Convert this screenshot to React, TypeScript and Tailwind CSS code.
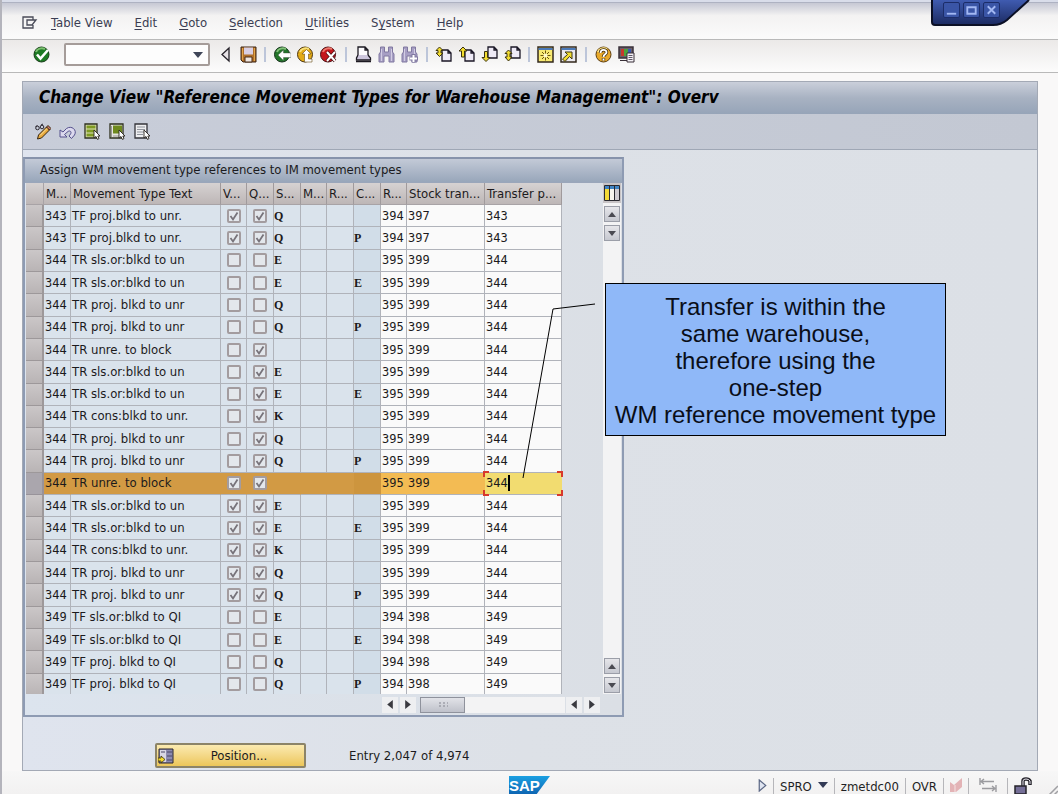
import type { ReactNode } from "react"

type Row = {
    type: string
    text: string
    v: boolean
    q: boolean
    stock: string
    special: string
    ref: string
    transfer: string
    posting: string
    selected?: boolean
}

const row = (type: string, text: string, v: number, q: number, stock: string, special: string, ref: string, transfer: string, selected = false): Row => ({
    type, text, v: v === 1, q: q === 1, stock, special, ref, transfer, posting: type, selected
})

const rows: Row[] = [
    row("343", "TF proj.blkd to unr.", 1, 1, "Q", "", "394", "397"),
    row("343", "TF proj.blkd to unr.", 1, 1, "Q", "P", "394", "397"),
    row("344", "TR sls.or:blkd to un", 0, 0, "E", "", "395", "399"),
    row("344", "TR sls.or:blkd to un", 0, 0, "E", "E", "395", "399"),
    row("344", "TR proj. blkd to unr", 0, 0, "Q", "", "395", "399"),
    row("344", "TR proj. blkd to unr", 0, 0, "Q", "P", "395", "399"),
    row("344", "TR unre. to block", 0, 1, "", "", "395", "399"),
    row("344", "TR sls.or:blkd to un", 0, 1, "E", "", "395", "399"),
    row("344", "TR sls.or:blkd to un", 0, 1, "E", "E", "395", "399"),
    row("344", "TR cons:blkd to unr.", 0, 1, "K", "", "395", "399"),
    row("344", "TR proj. blkd to unr", 0, 1, "Q", "", "395", "399"),
    row("344", "TR proj. blkd to unr", 0, 1, "Q", "P", "395", "399"),
    row("344", "TR unre. to block", 1, 1, "", "", "395", "399", true),
    row("344", "TR sls.or:blkd to un", 1, 1, "E", "", "395", "399"),
    row("344", "TR sls.or:blkd to un", 1, 1, "E", "E", "395", "399"),
    row("344", "TR cons:blkd to unr.", 1, 1, "K", "", "395", "399"),
    row("344", "TR proj. blkd to unr", 1, 1, "Q", "", "395", "399"),
    row("344", "TR proj. blkd to unr", 1, 1, "Q", "P", "395", "399"),
    row("349", "TF sls.or:blkd to QI", 0, 0, "E", "", "394", "398"),
    row("349", "TF sls.or:blkd to QI", 0, 0, "E", "E", "394", "398"),
    row("349", "TF proj. blkd to QI", 0, 0, "Q", "", "394", "398"),
    row("349", "TF proj. blkd to QI", 0, 0, "Q", "P", "394", "398"),
]

const menus = [
    { key: "T", rest: "able View" },
    { key: "E", rest: "dit" },
    { key: "G", rest: "oto" },
    { key: "S", rest: "election" },
    { key: "U", rest: "tilities" },
    { key: "y", before: "S", rest: "stem" },
    { key: "H", rest: "elp" },
]

const Icon = ({ children }: { children: ReactNode }) => (
    <svg viewBox="0 0 17 17" className="block size-[17px] shrink-0" fill="none" aria-hidden="true">{children}</svg>
)

const IconButton = ({ label, children }: { label: string, children: ReactNode }) => (
    <button type="button" aria-label={label} className="shrink-0"><Icon>{children}</Icon></button>
)

const Divider = () => <span className="block h-[15px] w-[2px] shrink-0 bg-[#bcc5d9]" />

// page sheet shared by the four paging icons
const Sheet = ({ x, y }: { x: number, y: number }) => (
    <path d={`M${x} ${y}h6l3 3v8h-9z M${x + 6} ${y}v3h3`} fill="#eeeaf6" stroke="#1b1726" strokeWidth="1.3" />
)

const Binoculars = () => (
    <>
        <path d="M2.500 1h4v5h4V1h4v5l1.500 2v8h-5v-6H6v6H1V8l1.500-2z" fill="#a79fc4" stroke="#8078a0" />
        <path d="M3.500 3v12M13.500 3v12" stroke="#d3cde4" />
    </>
)

const Toolbar = () => (
    <div className="flex h-[33px] items-center border-b border-[#b9b9b9] bg-linear-to-b from-[#ebe9e8] to-[#fcfcfc] pb-[3px] pl-[31px]">
        <IconButton label="Enter">
            <circle cx="8.500" cy="8.500" r="7.500" fill="#1d7a24" stroke="#173b18" />
            <path d="M3 6a6 5 0 0 1 9-3" stroke="#7cc06f" strokeWidth="2" />
            <path d="M4 8.500l3.500 4L15 4" stroke="#fff" strokeWidth="2.600" />
        </IconButton>
        <div className="ml-[14px] flex h-[23px] w-[146px] items-center rounded-[2px] border-2 border-[#a59c99] bg-[#fdfdfd]">
            <input aria-label="Command" className="min-w-0 flex-1 bg-transparent px-1 text-xs outline-none" />
            <button type="button" aria-label="Command history" className="pr-[5px]">
                <svg viewBox="0 0 10 6" className="h-[6px] w-[10px]"><path d="M0 0h10L5 6z" fill="#3f4558" /></svg>
            </button>
        </div>
        <div className="ml-[7px] flex items-center gap-[6px]">
            <IconButton label="Hide command field">
                <path d="M12 2v13L5 8.500z" fill="#e6e2e6" stroke="#26222a" strokeWidth="1.300" />
            </IconButton>
            <IconButton label="Save">
                <path d="M1 1h15v15H3l-2-2z" fill="#b0702a" stroke="#3c2415" />
                <path d="M4 1.500h9v7H4z" fill="#d9cfe2" />
                <path d="M5 11h7v5H5z" fill="#eee6e0" stroke="#4a2d18" />
                <path d="M2.500 2v12M14.500 2v13" stroke="#e2a54a" />
            </IconButton>
        </div>
        <div className="ml-[7px] mr-[8px]"><Divider /></div>
        <div className="flex items-center gap-[6px]">
            <IconButton label="Back">
                <circle cx="8" cy="8.500" r="7.500" fill="#23752a" stroke="#14301a" />
                <path d="M3 6a6 5 0 0 1 9-3" stroke="#83c078" strokeWidth="2" />
                <path d="M4 9l5.500-5v3h7.500v4.500H9.500v3z" fill="#fff" stroke="#3d4a3d" strokeWidth=".4" />
            </IconButton>
            <IconButton label="Exit">
                <circle cx="8" cy="8.500" r="7.500" fill="#e3ab16" stroke="#4a3410" />
                <path d="M3 6a6 5 0 0 1 9-3" stroke="#f8e27c" strokeWidth="2" />
                <path d="M9.500 3.500l4.500 4.500h-2.500v5H15v3H7.500V8H5z" fill="#fff" stroke="#6a4f18" strokeWidth=".6" />
            </IconButton>
            <IconButton label="Cancel">
                <circle cx="8" cy="8.500" r="7.500" fill="#c4161c" stroke="#4a1215" />
                <path d="M3 6a6 5 0 0 1 9-3" stroke="#ec7a6e" strokeWidth="2" />
                <path d="M7 6l8 9M15 6l-8 9" stroke="#4a1215" strokeWidth="3.400" />
                <path d="M7 6l8 9M15 6l-8 9" stroke="#fff" strokeWidth="2" />
            </IconButton>
        </div>
        <div className="mx-[8px]"><Divider /></div>
        <div className="flex items-center gap-[6px]">
            <IconButton label="Print">
                <path d="M3 1h7l3 3v6H3z M10 1v3h3" fill="#fbfafc" stroke="#1d1a22" strokeWidth="1.300" />
                <path d="M3 9l-1.500 3v2h14v-2L13 9" fill="#cdc6dc" stroke="#1d1a22" strokeWidth="1.300" />
                <path d="M1 15.500h15" stroke="#1d1a22" strokeWidth="1.500" />
            </IconButton>
            <IconButton label="Find"><Binoculars /></IconButton>
            <IconButton label="Find next">
                <Binoculars />
                <path d="M12.500 8v8.500M8.500 12.500h8.500" stroke="#8078a0" strokeWidth="4" />
                <path d="M12.500 9v7M9 12.500h7" stroke="#fff" strokeWidth="2" />
            </IconButton>
        </div>
        <div className="ml-[8px] mr-[7px]"><Divider /></div>
        <div className="flex items-center gap-[6px]">
            <IconButton label="First page">
                <Sheet x={7} y={4} />
                <path d="M4.500 1L1 4.500h2V7H1l3.500 3.500L8 7H6V4.500h2z" fill="#f2dc2f" stroke="#3a3210" />
            </IconButton>
            <IconButton label="Previous page">
                <Sheet x={7} y={4} />
                <path d="M5 1L1 5h2.500v6h3V5H9z" fill="#f2dc2f" stroke="#3a3210" />
            </IconButton>
            <IconButton label="Next page">
                <Sheet x={7} y={1} />
                <path d="M5 15.500l-4-4h2.500v-6h3v6H9z" fill="#f2dc2f" stroke="#3a3210" />
            </IconButton>
            <IconButton label="Last page">
                <Sheet x={7} y={1} />
                <path d="M4.500 4L1 7.500h2V11H1l3.500 4L8 11H6V7.500h2z" fill="#f2dc2f" stroke="#3a3210" />
            </IconButton>
        </div>
        <div className="mx-[7px]"><Divider /></div>
        <div className="flex items-center gap-[6px]">
            <IconButton label="New session">
                <path d="M1 1h15v15H1z" fill="#f8ea72" stroke="#33291c" strokeWidth="1.500" />
                <path d="M1.500 2h14v2h-14z" fill="#4c7ab8" />
                <path d="M8.500 4.500v10M3.500 9.500h10M5 6l7 7M12 6l-7 7" stroke="#6b5510" />
                <circle cx="8.500" cy="9.500" r="2" fill="#fff9c8" />
            </IconButton>
            <IconButton label="Create shortcut">
                <path d="M1 1h15v15H1z" fill="#eae8ee" stroke="#33291c" strokeWidth="1.500" />
                <path d="M1.500 2h14v2h-14z" fill="#4c7ab8" />
                <path d="M5 6h7v7l-2.500-2.500L5 15.500 2.500 13 7.500 8.500z" fill="#f1dc30" stroke="#3e3610" />
            </IconButton>
        </div>
        <div className="mx-[8px]"><Divider /></div>
        <div className="flex items-center gap-[6px]">
            <IconButton label="Help">
                <circle cx="8.500" cy="8.500" r="7.500" fill="#e8a92a" stroke="#5b3d12" />
                <path d="M3 6a6 5 0 0 1 9-3" stroke="#fbe58a" strokeWidth="2" />
                <path d="M5.500 7c0-4 6-4 6-.8 0 2.300-3 2-3 4.800M8.500 12.200v2.300" stroke="#3f2a0c" strokeWidth="3.400" />
                <path d="M5.500 7c0-4 6-4 6-.8 0 2.300-3 2-3 4.800M8.500 12.500v2" stroke="#fff" strokeWidth="1.900" />
            </IconButton>
            <IconButton label="Customize local layout">
                <path d="M1 1h14v11H1z" fill="#6a5f68" stroke="#3a3038" strokeWidth="1.500" />
                <path d="M3 3h3v7H3z" fill="#c9372c" />
                <path d="M6 3h4v7H6z" fill="#4ba23b" />
                <path d="M10 3h3v7h-3z" fill="#3c59b0" />
                <path d="M2 14.500h7" stroke="#3a3038" />
                <path d="M9 7h7v9H9z" fill="#f4f1f6" stroke="#3a3038" />
                <path d="M10.500 9.500h4M10.500 11.500h4M10.500 13.500h4" stroke="#5f5866" />
            </IconButton>
        </div>
    </div>
)

const CursorArrow = () => <path d="M10 7v8l2-1.500 1.500 3 1.500-1-1.200-2.500H16z" fill="#fff" stroke="#2a2620" strokeWidth=".9" />

const ViewToolbar = () => (
    <div className="flex h-[36px] items-center gap-[8px] border-b border-[#9fa7b5] bg-linear-to-r from-[#c8cdd9] to-[#c3c8d3] pb-px pl-[11px]">
        <IconButton label="Display / Change">
            <path d="M4.500 12L12.500 4l3 3-8 8-4 1z" fill="#e9a93b" stroke="#33240f" />
            <path d="M12.500 4l1.500-1.500 3 3L15.500 7z" fill="#cf7a6b" stroke="#33240f" />
            <path d="M6 12.500l7-7" stroke="#fae3a0" />
            <circle cx="3.500" cy="5" r="1.800" stroke="#2b2730" />
            <circle cx="8" cy="4" r="1.800" stroke="#2b2730" />
            <path d="M1.500 4l2-2M7 2l2-1" stroke="#2b2730" />
        </IconButton>
        <IconButton label="Undo">
            <path d="M1 7v7h7l-2.500-2.500L9 8.500c2-1.500 4 .5 2.500 2.500L10 13l2.500 2.500 3-3.500c3-5-3-10-8-6.500L4 9z" fill="#dcd9ee" stroke="#54508c" />
        </IconButton>
        <IconButton label="Select all">
            <path d="M1 1h12v14H1z" fill="#dfe3bb" stroke="#2e301e" strokeWidth="1.300" />
            <path d="M2.500 2.500h9v3h-9zM2.500 6.500h9v3h-9zM2.500 10.500h9v3h-9z" fill="#7f9a22" />
            <CursorArrow />
        </IconButton>
        <IconButton label="Select block">
            <path d="M1 1h13v14H1z" fill="#e6e5e0" stroke="#2e301e" strokeWidth="1.300" />
            <path d="M4 2.500h9v8H4z" fill="#6f8a1d" />
            <path d="M2.500 3v11M4 13h6" stroke="#9a9a92" />
            <CursorArrow />
        </IconButton>
        <IconButton label="Deselect all">
            <path d="M1 1h12v14H1z" fill="#eeeef0" stroke="#34343a" strokeWidth="1.300" />
            <path d="M3 4h8M3 6.500h8M3 9h8M3 11.500h6" stroke="#8f939b" />
            <CursorArrow />
        </IconButton>
    </div>
)

const Check = ({ checked, label }: { checked: boolean, label: string }) => (
    <span className="mx-auto grid size-[14px]">
        <input type="checkbox" aria-label={label} defaultChecked={checked} className="peer col-start-1 row-start-1 size-[14px] appearance-none rounded-[2px] border-2 border-[#a39c9f] bg-[#e3e7ec]" />
        <svg viewBox="0 0 14 14" className="pointer-events-none invisible col-start-1 row-start-1 size-[14px] peer-checked:visible" fill="none">
            <path d="M3.500 7l2.500 3.500L10.500 3.500" stroke="#77737a" strokeWidth="1.800" />
        </svg>
    </span>
)

const headers = ["M...", "Movement Type Text", "V...", "Q...", "S...", "M...", "R...", "C...", "R...", "Stock tran...", "Transfer p..."]

const MovementTable = () => (
    <table className="h-[513px] w-[536px] table-fixed border-separate border-spacing-0 whitespace-nowrap text-[12px] leading-4 text-[#1c1a1c]">
        <colgroup>
            <col className="w-[18px]" />
            <col className="w-[27px]" />
            <col className="w-[150px]" />
            <col className="w-[26px]" />
            <col className="w-[27px]" />
            <col className="w-[27px]" />
            <col className="w-[26px]" />
            <col className="w-[27px]" />
            <col className="w-[27px]" />
            <col className="w-[26px]" />
            <col className="w-[78px]" />
            <col className="w-[77px]" />
        </colgroup>
        <thead>
            <tr className="h-[22px] bg-linear-to-b from-[#d6d2d2] to-[#bcb5b5]">
                <td className="border-r border-b border-[#a8a3a6] p-0" />
                {headers.map((header, index) => (
                    <th key={index} scope="col" className="overflow-hidden border-r border-b border-r-[#a09a9c] border-b-[#a8a3a6] py-0 pr-0 pl-[2px] text-left text-[13px] font-normal">{header}</th>
                ))}
            </tr>
        </thead>
        <tbody>
            {rows.map((r, index) => {
                const line = "border-r border-b border-b-[#b0b3ba] p-0 " + (r.selected ? "border-r-transparent " : "border-r-[#b0b3ba] ")
                const fixed = line + (r.selected ? "bg-[#d29a44]" : "bg-[#dae3ec]")
                const special = line + (r.selected ? "bg-[#cd953e]" : "bg-[#d1dde8]")
                const edit = line + (r.selected ? "bg-[#f3bb53]" : "bg-[#fafafa]")
                const code = " font-['Liberation_Serif',serif] font-bold leading-4"
                const mono = " pl-px font-['DejaVu_Sans_Mono',monospace]"
                return (
                    <tr key={index}>
                        <td className={r.selected ? "border-r-2 border-b border-[#98939a] bg-[#aaa6ad] p-0" : "border-r-2 border-b border-[#9d989a] bg-linear-to-b from-[#cbc7c8] to-[#b9b4b5] p-0"} />
                        <td className={fixed + mono}>{r.type}</td>
                        <td className={fixed + " pl-px text-[13px]"}>{r.text}</td>
                        <td className={fixed}><Check checked={r.v} label="Value update" /></td>
                        <td className={fixed}><Check checked={r.q} label="Quantity update" /></td>
                        <td className={fixed + code}>{r.stock}</td>
                        <td className={fixed} />
                        <td className={fixed} />
                        <td className={special + code}>{r.special}</td>
                        <td className={edit + mono}>{r.ref}</td>
                        <td className={edit + mono}>{r.transfer}</td>
                        <td className={r.selected ? line + "relative bg-[#f2dc70] pl-px font-['DejaVu_Sans_Mono',monospace]" : edit + mono}>
                            {r.selected ? (
                                <>
                                    <span className="block w-[24px] border-r-2 border-black">{r.posting}</span>
                                    <span className="absolute -top-[2px] -left-[2px] size-[6px] border-t-2 border-l-2 border-[#d8382c]" />
                                    <span className="absolute -top-[2px] -right-[2px] size-[6px] border-t-2 border-r-2 border-[#d8382c]" />
                                    <span className="absolute -bottom-[2px] -left-[2px] size-[6px] border-b-2 border-l-2 border-[#d8382c]" />
                                    <span className="absolute -right-[2px] -bottom-[2px] size-[6px] border-r-2 border-b-2 border-[#d8382c]" />
                                </>
                            ) : r.posting}
                        </td>
                    </tr>
                )
            })}
        </tbody>
    </table>
)

const ScrollButton = ({ label, path }: { label: string, path: string }) => (
    <button type="button" aria-label={label} className="grid size-4 place-items-center border border-[#9b9ea8] bg-linear-to-b from-[#e6e6ea] to-[#c6c8d0]">
        <svg viewBox="0 0 8 5" className="h-[5px] w-[8px]"><path d={path} fill="#4a4a52" /></svg>
    </button>
)

const SideButton = ({ label, path }: { label: string, path: string }) => (
    <button type="button" aria-label={label} className="grid size-4 place-items-center bg-[#eeeff1]">
        <svg viewBox="0 0 5 8" className="h-[9px] w-[6px]"><path d={path} fill="#3a3a40" /></svg>
    </button>
)

const up = "M0 5L4 0l4 5z"
const down = "M0 0h8L4 5z"
const left = "M5 0v8L0 4z"
const right = "M0 0v8l5-4z"

const TableControl = () => (
    <section className="w-[601px] border-2 border-[#8e9bb3] border-t-[#8793ab] bg-linear-to-r from-[#dce4ee] to-[#dbdfe5]">
        <h2 className="flex h-[24px] items-center border-b border-[#9aa6ba] bg-linear-to-b from-[#c3cad7] to-[#98a6ba] pb-px pl-[15px] text-[13px]">Assign WM movement type references to IM movement types</h2>
        <div className="flex justify-between pl-px pr-px">
            <div className="max-h-[511px] overflow-hidden pr-[3px]">
                <MovementTable />
            </div>
            <div className="flex w-[18px] flex-col items-center bg-[#f3f3f4]">
                <button type="button" aria-label="Table settings" className="bg-[#c8c4c6] p-px pt-[2px] pb-[2px]">
                    <svg viewBox="0 0 16 16" className="size-4">
                        <path d="M.5.5h15v15H.5z" fill="#f7f5ee" stroke="#2a2a30" />
                        <path d="M1 1h14v3H1z" fill="#3f84c4" />
                        <path d="M1 4h4v11H1z" fill="#f3d935" />
                        <path d="M11 4h4v11h-4z" fill="#cfcbd0" />
                        <path d="M5.500 1v14M10.500 1v14" stroke="#2a2a30" />
                    </svg>
                </button>
                <div className="flex flex-1 flex-col justify-between pt-[3px]">
                    <div className="flex flex-col gap-[3px]">
                        <ScrollButton label="Scroll up" path={up} />
                        <ScrollButton label="Page down" path={down} />
                    </div>
                    <div className="flex flex-col gap-[3px] pb-px">
                        <ScrollButton label="Page up" path={up} />
                        <ScrollButton label="Scroll down" path={down} />
                    </div>
                </div>
            </div>
        </div>
        <div className="flex h-[21px] items-center pl-[357px]">
            <div className="flex gap-[2px]">
                <SideButton label="First column" path={left} />
                <SideButton label="Previous column" path={right} />
            </div>
            <div className="ml-[4px] flex h-4 w-[145px] bg-[#f3f3f4]">
                <button type="button" aria-label="Horizontal position" className="grid h-4 w-[45px] place-items-center border border-[#8f929c] bg-linear-to-b from-[#e2e3e8] to-[#bfc1ca]">
                    <svg viewBox="0 0 10 5" className="h-[5px] w-[10px]"><path d="M1 1h2M5 1h2M9 1h1M1 4h2M5 4h2M9 4h1" stroke="#83858f" /></svg>
                </button>
            </div>
            <div className="ml-[1px] flex gap-[2px]">
                <SideButton label="Next column" path={left} />
                <SideButton label="Last column" path={right} />
            </div>
        </div>
    </section>
)

const Callout = () => (
    <>
        <svg viewBox="0 0 80 180" className="pointer-events-none absolute top-[300px] left-[518px] h-[180px] w-[80px]" fill="none">
            <path d="M75 4L33 9L3 178" stroke="#000" />
        </svg>
        <p className="absolute top-[283px] left-[603px] w-[341px] border border-black bg-[#8fb8f8] pt-[9px] pb-[7px] text-center font-['Liberation_Sans',sans-serif] text-[24px] leading-[27px] text-[#0a0e18]">
            Transfer is within the<br />
            same warehouse,<br />
            therefore using the<br />
            one-step<br />
            WM reference movement type
        </p>
    </>
)

const WindowControls = () => (
    <div className="absolute top-0 right-[26px] h-[27px] w-[101px]">
        <svg viewBox="0 0 101 27" className="absolute inset-0" aria-hidden="true">
            <defs>
                <linearGradient id="tab" x1="0" y1="0" x2="0" y2="1">
                    <stop offset="0" stopColor="#3f5bb0" />
                    <stop offset="1" stopColor="#1b2a60" />
                </linearGradient>
            </defs>
            <path d="M1 0v22q0 3 3 3h58q8 0 14-5L98 0z" fill="url(#tab)" />
            <path d="M1 0v22q0 3 3 3h58q8 0 14-5L98 0" fill="none" stroke="#0b1026" strokeWidth="2" />
        </svg>
        <div className="relative flex gap-[3px] pt-[2px] pl-[12px]">
            {[
                { label: "Minimize", path: "M3 11.500h10" },
                { label: "Maximize", path: "M3.500 4.500h9v7h-9zM3 4.500h10" },
                { label: "Close", path: "M4 3.500l8 8M12 3.500l-8 8" },
            ].map((item) => (
                <button key={item.label} type="button" aria-label={item.label} className="h-4 w-[17px] rounded-[2px] border border-[#1c2d69] bg-[#3a55a6]">
                    <svg viewBox="0 0 16 15" className="h-[14px] w-[15px]" fill="none"><path d={item.path} stroke="#a3b8f3" strokeWidth="2" /></svg>
                </button>
            ))}
        </div>
    </div>
)

const StatusDivider = () => <span className="mt-[3px] h-4 w-px bg-[#b6b6ba]" />

const StatusBar = () => (
    <footer className="grid h-[23px] grid-cols-[1fr_auto_1fr] items-start overflow-hidden bg-linear-to-b from-[#f7f7f7] to-[#f2f1f1] pt-[4px] text-[13px] leading-[24px] text-[#1f1f24]">
        <span />
        <svg viewBox="0 0 42 20" className="h-[20px] w-[42px]" role="img" aria-label="SAP">
            <defs>
                <linearGradient id="sap" x1="0" y1="0" x2="0" y2="1">
                    <stop offset="0" stopColor="#1ba0e2" />
                    <stop offset="1" stopColor="#0d62b0" />
                </linearGradient>
            </defs>
            <path d="M0 1h41L27 20H0z" fill="url(#sap)" />
            <text x="0" y="16" fill="#fff" fontSize="15" fontWeight="700" fontFamily="Liberation Sans, sans-serif">SAP</text>
        </svg>
        <div className="flex items-start justify-end gap-[6px]">
            <svg viewBox="0 0 9 14" className="mt-[4px] h-[13px] w-[9px]"><path d="M1 1l7 6-7 6z" fill="#dfe4f0" stroke="#5a6684" strokeWidth="1.300" /></svg>
            <StatusDivider />
            <button type="button" className="flex items-center gap-[6px]">SPRO
                <svg viewBox="0 0 10 6" className="mb-[4px] h-[6px] w-[10px]"><path d="M0 0h10L5 6z" fill="#333a55" /></svg>
            </button>
            <StatusDivider />
            <span>zmetdc00</span>
            <StatusDivider />
            <span>OVR</span>
            <StatusDivider />
            <svg viewBox="0 0 12 14" className="mt-[3px] h-[14px] w-[12px]"><path d="M0 14V4l4 3 8-7v9l-6 5z" fill="#e3b3b6" /><path d="M5 7v7" stroke="#f5e2e2" /></svg>
            <StatusDivider />
            <svg viewBox="0 0 18 14" className="mx-1 mt-[3px] h-[14px] w-[18px]" fill="none" stroke="#9b9b9f" strokeWidth="1.400"><path d="M1 0v7M2 3.500h13M5 1L2 3.500 5 6M17 7v7M3 10.500h13M13 8l3 2.500-3 2.500" /></svg>
            <StatusDivider />
            <svg viewBox="0 0 18 18" className="mt-[2px] size-[18px]" fill="none"><path d="M9 9V4q0-2 3-2t4 2v4" stroke="#25232a" strokeWidth="3.500" /><path d="M9 9V4q0-2 3-2t4 2v3" stroke="#e8e6ee" /><path d="M1 9h11v8H1z" fill="#756f97" stroke="#25232a" strokeWidth="1.500" /></svg>
            <svg viewBox="0 0 12 12" className="mt-[10px] ml-[8px] size-[12px]"><path d="M1 12L12 1M6 12l6-6" stroke="#a0a0a4" strokeWidth="1.500" /></svg>
        </div>
    </footer>
)

export default function App() {
    return (
        <div className="relative flex min-h-screen flex-col border-l-2 border-[#b4b4bc] bg-[#f9f8f8] font-['DejaVu_Sans_Condensed','DejaVu_Sans',sans-serif] text-[#1b1b20]">
            <header>
                <div className="h-[3px] border-b border-[#aeb2c2] bg-[#d9ddea]" />
                <nav className="flex h-[37px] items-center gap-[22px] border-b border-[#b9b9b9] bg-linear-to-b from-[#c6c8d4] via-[#f3f2f2] via-35% to-[#fbfbfb] pt-[4px] pl-[20px] text-[13px] text-[#3b3d52]">
                    <button type="button" aria-label="System menu" className="-mr-[9px]">
                        <svg viewBox="0 0 16 14" className="h-[14px] w-[16px]" fill="none" stroke="#494b58" strokeWidth="1.300"><path d="M11 4V1H1v11h10V9M5 4h9l-4 5H5z" /></svg>
                    </button>
                    {menus.map((menu) => (
                        <button key={menu.key} type="button">{menu.before}<span className="underline underline-offset-2">{menu.key}</span>{menu.rest}</button>
                    ))}
                </nav>
                <Toolbar />
            </header>
            <main className="mt-[8px] mr-[20px] ml-[20px] flex flex-1 flex-col border border-[#a3a9b5] bg-linear-to-r from-[#dfe4ee] via-[#dde1e7] to-[#dce0e6]">
                <h1 className="flex h-[32px] items-center bg-linear-to-b from-[#cacfda] via-[#a8b2c2] to-[#96a4b8] pl-[16px] text-[17px] font-bold whitespace-nowrap text-black italic">Change View "Reference Movement Types for Warehouse Management": Overv</h1>
                <ViewToolbar />
                <div className="pt-[7px]">
                    <TableControl />
                    <div className="flex items-center gap-[43px] pt-[26px] pl-[132px] text-[13px]">
                        <button type="button" className="flex h-[25px] w-[151px] items-center rounded-[2px] border-2 border-[#8c8468] bg-linear-to-b from-[#fbeab0] to-[#ecc658] pl-px">
                            <svg viewBox="0 0 16 16" className="size-4"><path d="M1 1h14v14H1z" fill="#8d8bb0" stroke="#2b2630" /><path d="M2 2h6v12H2z" fill="#d8d6e4" /><path d="M9 4h5M9 8h5M9 12h5M3 4h4" stroke="#4a4768" /><path d="M0 10h3V8l4 3.500L3 15v-2H0z" fill="#f2d92e" stroke="#3b3110" strokeWidth=".8" /></svg>
                            <span className="flex-1 text-center">Position...</span>
                        </button>
                        <span>Entry 2,047 of 4,974</span>
                    </div>
                </div>
            </main>
            <StatusBar />
            <WindowControls />
            <Callout />
        </div>
    )
}
